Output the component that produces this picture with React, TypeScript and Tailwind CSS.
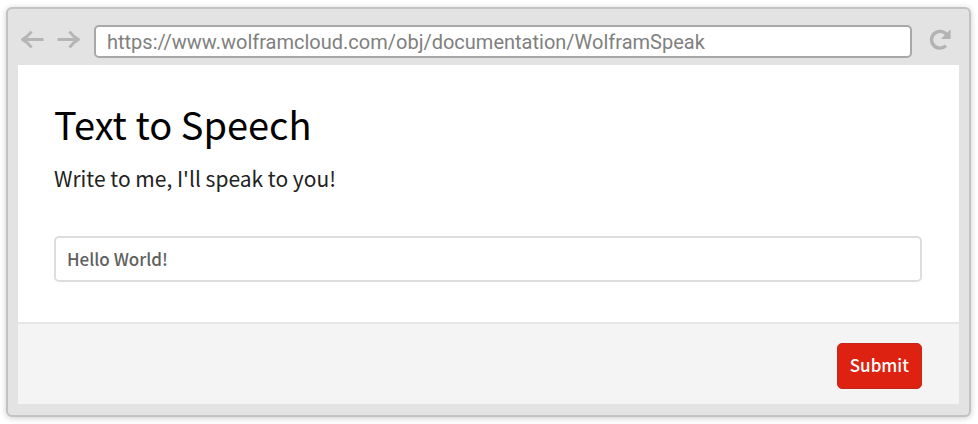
import { useState } from "react";
import type { FormEvent } from "react";

const pageUrl = "https://www.wolframcloud.com/obj/documentation/WolframSpeak";

const ArrowIcon = ({ flip }: { flip?: boolean }) => (
  <svg
    className={flip ? "-scale-x-100" : ""}
    width="24"
    height="20"
    viewBox="0 0 24 20"
    fill="none"
    stroke="#b5b5b5"
    strokeWidth="3"
  >
    <path d="M11.5 1.5 Q8 6.5 2.5 9.5 Q8 12.5 11.5 17.5" strokeLinejoin="round" />
    <path d="M2.5 9.5 H23.5" />
  </svg>
);

const ReloadIcon = () => (
  <svg width="22" height="22" viewBox="0 0 22 22" fill="none">
    <path d="M17.6 5.6 A8.4 8.4 0 1 0 17 16.6" stroke="#b3b3b3" strokeWidth="3.4" />
    <path d="M21.6 0.3 V10 H12 Z" fill="#b3b3b3" />
  </svg>
);

const BrowserBar = () => {
  const [url, setUrl] = useState(pageUrl);

  return (
    <div className="flex items-center pt-4 pb-[7px] pl-[2px]">
      <button type="button" aria-label="Back" className="mb-1">
        <ArrowIcon />
      </button>
      <button type="button" aria-label="Forward" className="ml-[13px] mb-1">
        <ArrowIcon flip />
      </button>
      <input
        type="text"
        aria-label="Address"
        className="ml-[13px] h-[33px] min-w-0 flex-1 rounded-[5px] border-2 border-[#a8a8a8] bg-white px-[11px] font-['Roboto',sans-serif] text-[20px] text-[#808080] outline-none"
        value={url}
        onChange={(e) => setUrl(e.target.value)}
      />
      <button type="button" aria-label="Reload" className="ml-[17px] mr-2 mb-1">
        <ReloadIcon />
      </button>
    </div>
  );
};

const SpeechForm = () => {
  const [text, setText] = useState("Hello World!");

  const handleSubmit = (e: FormEvent) => {
    e.preventDefault();
    window.speechSynthesis?.speak(new SpeechSynthesisUtterance(text));
  };

  return (
    <form className="bg-white" onSubmit={handleSubmit}>
      <div className="pl-9 pr-[37px] pt-[35px] pb-10">
        <h1 className="text-[38px] leading-[48px] text-black">Text to Speech</h1>
        <label htmlFor="speech" className="mt-4 block text-[21px] leading-7 text-[#222222]">
          Write to me, I'll speak to you!
        </label>
        <input
          id="speech"
          type="text"
          className="mt-11 block h-[46px] w-full rounded-[5px] border-2 border-[#dddddd] px-[11px] pb-[2px] text-[17px] font-medium text-[#606060] outline-none"
          value={text}
          onChange={(e) => setText(e.target.value)}
        />
      </div>
      <div className="flex justify-end border-t-2 border-[#e6e6e6] bg-[#f4f4f4] pl-9 pr-[37px] pt-[19px] pb-[15px]">
        <button
          type="submit"
          className="h-[46px] rounded-[5px] border border-[#c5281a] bg-[#dd2211] px-3 pb-[2px] text-[17px] font-medium text-white"
        >
          Submit
        </button>
      </div>
    </form>
  );
};

const App = () => {
  return (
    <main className="bg-white pl-[6px] pr-[7px] pt-[7px] pb-[7px] font-['Noto_Sans_CJK_SC',sans-serif]">
      <div className="rounded-[6px] border-2 border-[#c2c2c2] bg-[#e3e3e3] px-[10px] pb-[11px] shadow-[0_1px_6px_rgba(0,0,0,0.2)]">
        <BrowserBar />
        <SpeechForm />
      </div>
    </main>
  );
};

export default App;
